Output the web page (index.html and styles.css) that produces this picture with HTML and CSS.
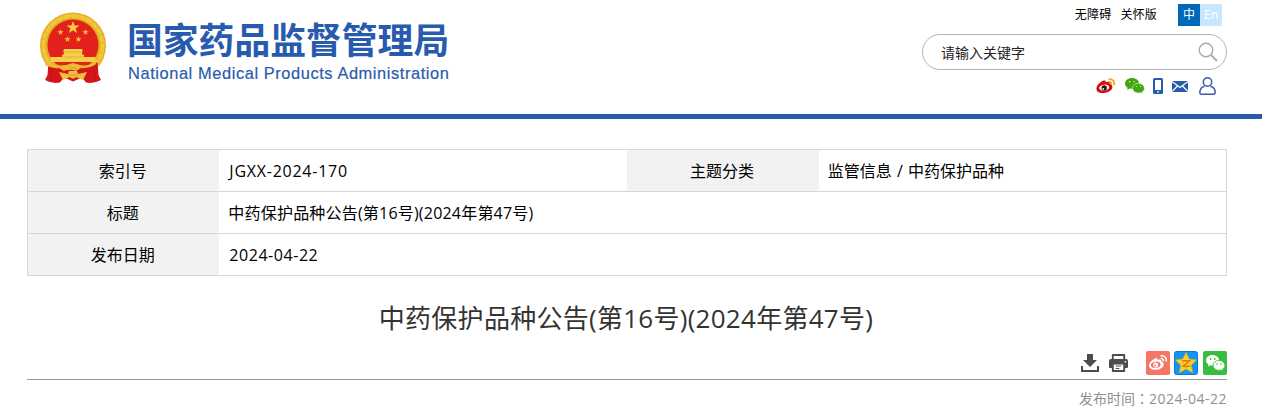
FILE: index.html
```html
<!DOCTYPE html>
<html lang="zh-CN">

<head>
  <meta charset="UTF-8">
  <meta name="viewport" content="width=device-width, initial-scale=1.0">
  <title>中药保护品种公告(第16号)(2024年第47号)</title>
  <link rel="stylesheet" href="styles.css">
</head>

<body>
  <header class="header">
    <div class="logo">
      <svg class="emblem" viewBox="0 0 68 72" width="68" height="72">
        <circle cx="34" cy="33.500" r="33" fill="#e4ad1d" />
        <circle cx="34" cy="33.500" r="29.500" fill="none" stroke="#f0c63c" stroke-width="4" stroke-dasharray="7 .6" />
        <circle cx="34" cy="33" r="25.500" fill="#e2211c" />
        <path d="M34 9l1.600 4.500h4.900l-3.900 2.900 1.500 4.700-4.100-2.900-4.100 2.900 1.500-4.700-3.900-2.900h4.900z" fill="#f7cf3d" />
        <path id="s" d="M21.500 17l.8 2.300h2.400l-2 1.400.8 2.300-2-1.400-2 1.400.8-2.300-2-1.400h2.400z" fill="#f3c535" />
        <use href="#s" x="25" />
        <use href="#s" x="7" y="7" />
        <use href="#s" x="18" y="7" />
        <path d="M25 37h18l1 2.500H24zM25 39.500h18v3h2v2.500h11.500v5h-45v-5H23v-2.500h2z" fill="#f5cf4a" />
        <path d="M24 40h20M23 45h22" stroke="#e5a52c" stroke-width=".8" />
        <path d="M9.500 50q7 6 17 3l7.500-1 7.500 1q10 3 17-3l1 13 2.500 5q-7 4-15 2.500l-4-5-9 4-9-4-4 5q-8 1.500-15-2.500l2.500-5z" fill="#d4161b" />
        <path d="M9 48q8 7 18 5l7-2 7 2q10 2 18-5l-3 5q-7 4-14 3l-5 3-3-1h-6l-3 1-5-3q-7 1-14-3z" fill="#eebb32" />
        <path d="M20 60l9 2 1-3h8l1 3 9-2-4 8-7-3q-3 3-6 0l-7 3z" fill="#f0c03a" />
        <path d="M13 57l-1 12M55 57l1 12" stroke="#b5121a" stroke-width="1" />
        <path d="M30 57q4-3 8 0M29 63h10" fill="none" stroke="#d69425" stroke-width=".8" />
      </svg>
      <div class="logo-text">
        <div class="logo-cn">国家药品监督管理局</div>
        <div class="logo-en">National Medical Products Administration</div>
      </div>
    </div>
    <div class="tools">
      <div class="top-links">
        <a class="link">无障碍</a>
        <a class="link">关怀版</a>
        <div class="lang"><a class="cn">中</a><a class="en">En</a></div>
      </div>
      <div class="search">
        <span>请输入关键字</span>
        <svg width="20" height="20" viewBox="0 0 20 20" fill="none" stroke="#ababab">
          <circle cx="8" cy="8" r="6.800" stroke-width="1.400" />
          <path d="M13 13l6 6" stroke-width="1.800" />
        </svg>
      </div>
      <div class="contacts">
        <svg width="20" height="16" viewBox="0 0 20 16">
          <path d="M7.500 2.600c1.700-.6 2.500.3 2.100 1.700 2.300-1 4.600-.6 4 1.500 3.600 1 3.700 4.600.5 7-3.600 2.700-9.800 2.900-12.600.6C-1.200 11.200 1.500 5 7.500 2.600z" fill="#d8080c" />
          <ellipse cx="8.200" cy="9.600" rx="5" ry="3" fill="#fff" transform="rotate(-8 8.200 9.600)" />
          <circle cx="8.200" cy="10" r="2.700" fill="#222" />
          <circle cx="7.300" cy="10.800" r=".9" fill="#fff" />
          <path d="M12.500 1.200c3.500-1 6.600 2.200 5.500 6M12.700 3.800c1.700-.4 3 1 2.600 2.700" fill="none" stroke="#eea516" stroke-width="1.700" />
        </svg>
        <svg class="wechat" width="20" height="16" viewBox="0 0 20 16">
          <path d="M7 0C3.100 0 0 2.400 0 5.400c0 1.900 1 3.300 2.700 4.300L2 12l2.700-1.500c1 .2 1.800.3 2.700.3C11 10.500 14 8.300 14 5.300S10.900 0 7 0z" fill="#43a70f" />
          <path d="M13.500 5.400c-3.300 0-6 2.100-6 4.800s2.700 4.800 6 4.800c.7 0 1.400-.1 2.100-.3l2.200 1.200-.6-1.900c1.500-.9 2.300-2.200 2.300-3.800 0-2.700-2.700-4.800-6-4.800z" fill="#43a70f" stroke="#fff" stroke-width=".6" />
          <path d="M4 3h1.300v1.300H4zM8.500 3h1.300v1.300H8.500zM11 8h1v1h-1zM15 8h1v1h-1z" fill="#c9e6bb" />
        </svg>
        <svg class="phone" width="10" height="16" viewBox="0 0 10 16">
          <rect width="10" height="16" rx="1.500" fill="#285bae" />
          <path d="M2 2h6v10H2z" fill="#fff" />
          <circle cx="5" cy="13.800" r=".9" fill="#fff" />
        </svg>
        <svg class="mail" width="16" height="11" viewBox="0 0 16 11">
          <path d="M0 0h16v11H0z" fill="#285bae" />
          <path d="M0 .5l8 6 8-6M0 10.500L5.500 5M16 10.500L10.500 5" fill="none" stroke="#fff" stroke-width="1.200" />
        </svg>
        <svg class="user" width="17" height="18" viewBox="0 0 17 18" fill="none" stroke="#3e5aab" stroke-width="1.500">
          <circle cx="8.500" cy="5" r="4.200" />
          <path d="M5.500 9.200C2.600 10 1 12 .8 15.200c0 1.300.6 2 1.800 2h11.800c1.200 0 1.800-.7 1.800-2C16 12 14.400 10 11.500 9.200" />
        </svg>
      </div>
    </div>
  </header>

  <main class="main">
    <table class="info">
      <tr>
        <th>索引号</th>
        <td class="code">JGXX-2024-170</td>
        <th>主题分类</th>
        <td class="type">监管信息 / 中药保护品种</td>
      </tr>
      <tr>
        <th>标题</th>
        <td colspan="3" class="name">中药保护品种公告(第16号)(2024年第47号)</td>
      </tr>
      <tr>
        <th>发布日期</th>
        <td colspan="3" class="num">2024-04-22</td>
      </tr>
    </table>

    <h1 class="title">中药保护品种公告(第16号)(2024年第47号)</h1>

    <div class="share">
      <svg width="18" height="18" viewBox="0 0 18 18" fill="#4c4c4c">
        <path d="M6 0h6v6h4l-7 7-7-7h4zM0 12h2v4h14v-4h2v6H0z" />
      </svg>
      <svg class="print" width="19" height="18" viewBox="0 0 20 18" preserveAspectRatio="none">
        <path d="M3 5V1q0-1 1-1h12q1 0 1 1v4h1q2 0 2 2v6q0 1-1 1h-2v3q0 1-1 1H4q-1 0-1-1v-3H1q-1 0-1-1V7q0-2 2-2z" fill="#4c4c4c" />
        <path d="M5 2h10v3H5zM5 10.500h10V16H5zM16.500 7H18v1.500h-1.500z" fill="#fff" />
        <path d="M7 12h6M7 14.500h4" stroke="#4c4c4c" />
      </svg>
      <svg width="24" height="24" viewBox="0 0 24 24">
        <rect width="24" height="24" rx="2" fill="#f57566" />
        <path d="M9.500 7.200c1.700-.6 2.500.3 2.100 1.700 2.300-.8 4.400-.4 3.900 1.500 3.100 1 3 4.400.1 6.500-3.300 2.400-8.800 2.600-11.300.4C1.400 14.700 4.100 9.400 9.500 7.200z" fill="#fff" />
        <ellipse cx="9.700" cy="13.800" rx="4.800" ry="3.100" fill="#f57566" transform="rotate(-8 9.700 13.800)" />
        <circle cx="9.700" cy="14" r="2.500" fill="#fff" />
        <circle cx="9" cy="14.500" r=".9" fill="#f57566" />
        <path d="M14.500 5c3.700-1 6.800 2 5.600 5.700M14.800 7.500c1.800-.4 3.100 1 2.600 2.700" fill="none" stroke="#fff" stroke-width="1.400" />
      </svg>
      <svg class="qzone" width="24" height="24" viewBox="0 0 24 24">
        <rect x=".5" y=".5" width="23" height="23" rx="2" fill="#1296f3" stroke="#087bd4" />
        <path d="M12 1.500l3.200 6.600 7.500.9-5.500 5.100 1.500 7.600-6.700-3.700-6.700 3.700 1.500-7.600L1.300 9l7.500-.9z" fill="#ffcf27" stroke="#f0a80e" stroke-width=".6" />
        <path d="M8.300 9.800h7.200l-6.200 5.400q4 .5 7-.3" fill="none" stroke="#d97e05" stroke-width="1.500" />
      </svg>
      <svg class="weixin" width="24" height="24" viewBox="0 0 24 24">
        <rect width="24" height="24" rx="2" fill="#39bd3e" />
        <path d="M9.500 4C5.800 4 3 6.400 3 9.300c0 1.800.9 3.200 2.500 4.100L5 15.500l2.400-1.300c.7.200 1.400.3 2.100.3 3.700 0 6.500-2.300 6.500-5.200S13.200 4 9.500 4z" fill="#fff" />
        <path d="M16 9.500c-3.300 0-5.900 2.100-5.900 4.900s2.600 4.900 5.900 4.900c.7 0 1.300-.1 1.900-.3l2.200 1.200-.6-2c1.500-.9 2.400-2.200 2.400-3.800 0-2.800-2.600-4.900-5.900-4.900z" fill="#fff" stroke="#39bd3e" stroke-width=".8" />
        <g fill="#39bd3e">
          <circle cx="7.500" cy="8" r=".9" />
          <circle cx="11.800" cy="8" r=".9" />
          <circle cx="14" cy="13" r=".8" />
          <circle cx="18" cy="13" r=".8" />
        </g>
      </svg>
    </div>
    <div class="date">发布时间<i lang="zh-TW">：</i><span>2024-04-22</span></div>
  </main>
</body>

</html>
```
FILE: styles.css
```css
* {
  box-sizing: border-box;
}

body {
  margin: 0;
  font-family: "Open Sans", "Noto Sans CJK SC", sans-serif;
  color: #000;
  background-color: #fff;
}

svg {
  display: block;
  flex: none;
}

.header {
  height: 119px;
  padding: 0 35px 0 39px;
  border-bottom: 5px solid #285bae;
  display: flex;
  justify-content: space-between;
}

.logo {
  display: flex;
  padding-top: 12px;
}

.logo-text {
  margin-left: 20px;
  color: #285bae;
  white-space: nowrap;
}

.logo-cn {
  margin-top: 3px;
  font: bold 35.8px/46px "Noto Sans CJK SC", sans-serif;
}

.logo-en {
  margin: 1px 0 0 1px;
  font: 16.4px/22px "Liberation Sans", Arial, sans-serif;
  letter-spacing: 0.59px;
  -webkit-text-stroke: 0.2px #285bae;
}

.tools {
  width: 305px;
}

.top-links {
  height: 34px;
  padding: 4px 5px 0 0;
  display: flex;
  justify-content: flex-end;
  font-size: 12px;
  line-height: 22px;
}

.link {
  margin-right: 9px;
  letter-spacing: 0.2px;
}

.lang {
  display: flex;
  margin-left: 12px;
  color: #fff;
  text-align: center;
}

.lang a {
  width: 22px;
  height: 22px;
}

.cn {
  background-color: #0068b9;
}

.en {
  background-color: #c9e6ff;
}

.search {
  height: 36px;
  border: 1px solid #b3b3b3;
  border-radius: 18px;
  padding: 0 8px 0 18px;
  display: flex;
  align-items: center;
  justify-content: space-between;
  font-size: 14px;
  color: #222;
}

.contacts {
  height: 32px;
  padding-right: 11px;
  display: flex;
  align-items: center;
  justify-content: flex-end;
}

.wechat {
  margin-left: 9px;
}

.phone {
  margin-left: 8px;
}

.mail {
  margin-left: 9px;
}

.user {
  margin-left: 11px;
}

.main {
  width: 1200px;
  margin: 30px 0 0 27px;
}

.info {
  width: 1200px;
  table-layout: fixed;
  border-collapse: collapse;
  border: 1px solid #d7d7d7;
  font-size: 16px;
  line-height: 24px;
}

.info tr {
  height: 42px;
  border-bottom: 1px solid #d7d7d7;
}

.info th {
  width: 16%;
  padding: 0 2px 0 0;
  background-color: #f2f2f2;
  font-weight: normal;
}

.info td {
  padding: 0 9px;
}

.info .code,
.info .num {
  padding-left: 10px;
}

.code {
  letter-spacing: 0.75px;
}

.num {
  letter-spacing: 0.55px;
}

.name {
  letter-spacing: 0.2px;
}

.type {
  word-spacing: 1px;
}

.title {
  margin: 22px 0 0;
  padding-right: 2px;
  font-size: 26px;
  line-height: 40px;
  font-weight: normal;
  text-align: center;
  color: #333;
  letter-spacing: 0.27px;
}

.share {
  height: 42px;
  padding-top: 8px;
  border-bottom: 1px solid #999;
  display: flex;
  align-items: center;
  justify-content: flex-end;
}

.print {
  margin: 0 18px 0 10px;
}

.qzone {
  margin-left: 4px;
}

.weixin {
  margin-left: 5px;
}

.date {
  margin-top: 7px;
  font-size: 14px;
  line-height: 22px;
  text-align: right;
  color: #8f8f8f;
}

.date i {
  font-family: "Noto Sans CJK TC", sans-serif;
  font-style: normal;
}

.date span {
  letter-spacing: 0.5px;
}
```
